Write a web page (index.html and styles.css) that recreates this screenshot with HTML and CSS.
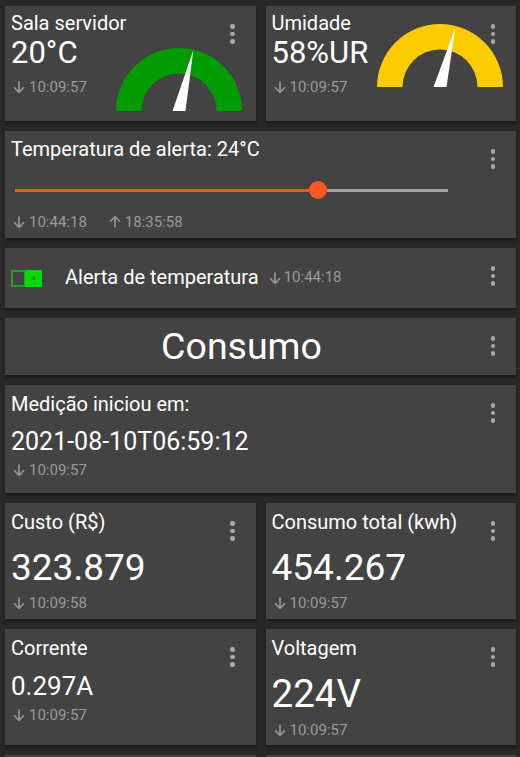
FILE: index.html
```html
<!DOCTYPE html>
<html lang="pt">
<head>
<meta charset="utf-8">
<title>Painel</title>
<link rel="stylesheet" href="styles.css">
</head>
<body>
<main class="board">

  <section class="tile tile-gauge gauge-low">
    <div class="info">
      <div class="title">Sala servidor</div>
      <div class="value value-gauge">20°C</div>
      <div class="stamp"><svg class="arrow" viewBox="0 0 12 12"><path d="M6 0.5V11.3M1 6.3L6 11.3L11 6.3"/></svg>10:09:57</div>
    </div>
    <svg class="gauge" viewBox="-63 -63 126 63">
      <path class="arc-green" d="M-63 0A63 63 0 0 1 63 0L37.5 0A37.5 37.5 0 0 0 -37.5 0Z"/>
      <polygon class="needle" points="-6.5,0 6.5,0 14.3,-60.7"/>
    </svg>
    <div class="menu"><span></span><span></span><span></span></div>
  </section>

  <section class="tile tile-gauge gauge-high">
    <div class="info">
      <div class="title">Umidade</div>
      <div class="value value-gauge">58%UR</div>
      <div class="stamp"><svg class="arrow" viewBox="0 0 12 12"><path d="M6 0.5V11.3M1 6.3L6 11.3L11 6.3"/></svg>10:09:57</div>
    </div>
    <svg class="gauge" viewBox="-63 -63 126 63">
      <path class="arc-yellow" d="M-63 0A63 63 0 0 1 63 0L37.5 0A37.5 37.5 0 0 0 -37.5 0Z"/>
      <polygon class="needle" points="-6.5,0 6.5,0 15.3,-59"/>
    </svg>
    <div class="menu"><span></span><span></span><span></span></div>
  </section>

  <section class="tile tile-slider wide">
    <div class="title">Temperatura de alerta: 24°C</div>
    <div class="slider">
      <div class="slider-fill" style="width:67.9%"></div>
      <div class="slider-thumb"></div>
      <div class="slider-rest"></div>
    </div>
    <div class="stamps">
      <div class="stamp"><svg class="arrow" viewBox="0 0 12 12"><path d="M6 0.5V11.3M1 6.3L6 11.3L11 6.3"/></svg>10:44:18</div>
      <div class="stamp"><svg class="arrow" viewBox="0 0 12 12"><path d="M6 11.5V0.7M1 5.7L6 0.7L11 5.7"/></svg>18:35:58</div>
    </div>
    <div class="menu"><span></span><span></span><span></span></div>
  </section>

  <section class="tile tile-switch wide">
    <svg class="switch" viewBox="0 0 31 17">
      <rect class="switch-off" x="1" y="1" width="13" height="15"/>
      <rect class="switch-on" x="14" y="0" width="17" height="17"/>
      <rect class="switch-dot" x="20.5" y="6.5" width="3.5" height="3.5"/>
    </svg>
    <div class="switch-label">
      <span class="title">Alerta de temperatura</span>
      <span class="stamp"><svg class="arrow" viewBox="0 0 12 12"><path d="M6 0.5V11.3M1 6.3L6 11.3L11 6.3"/></svg>10:44:18</span>
    </div>
    <div class="menu"><span></span><span></span><span></span></div>
  </section>

  <section class="tile tile-header wide">
    <div class="header-text">Consumo</div>
    <div class="menu"><span></span><span></span><span></span></div>
  </section>

  <section class="tile tile-text wide">
    <div class="title">Medição iniciou em:</div>
    <div class="value value-date">2021-08-10T06:59:12</div>
    <div class="stamp"><svg class="arrow" viewBox="0 0 12 12"><path d="M6 0.5V11.3M1 6.3L6 11.3L11 6.3"/></svg>10:09:57</div>
    <div class="menu"><span></span><span></span><span></span></div>
  </section>

  <section class="tile tile-value">
    <div class="title">Custo (R$)</div>
    <div class="value value-big">323.879</div>
    <div class="stamp"><svg class="arrow" viewBox="0 0 12 12"><path d="M6 0.5V11.3M1 6.3L6 11.3L11 6.3"/></svg>10:09:58</div>
    <div class="menu"><span></span><span></span><span></span></div>
  </section>

  <section class="tile tile-value">
    <div class="title">Consumo total (kwh)</div>
    <div class="value value-big">454.267</div>
    <div class="stamp"><svg class="arrow" viewBox="0 0 12 12"><path d="M6 0.5V11.3M1 6.3L6 11.3L11 6.3"/></svg>10:09:57</div>
    <div class="menu"><span></span><span></span><span></span></div>
  </section>

  <section class="tile tile-value">
    <div class="title">Corrente</div>
    <div class="value value-small">0.297A</div>
    <div class="stamp"><svg class="arrow" viewBox="0 0 12 12"><path d="M6 0.5V11.3M1 6.3L6 11.3L11 6.3"/></svg>10:09:57</div>
    <div class="menu"><span></span><span></span><span></span></div>
  </section>

  <section class="tile tile-value">
    <div class="title">Voltagem</div>
    <div class="value value-huge">224V</div>
    <div class="stamp"><svg class="arrow" viewBox="0 0 12 12"><path d="M6 0.5V11.3M1 6.3L6 11.3L11 6.3"/></svg>10:09:57</div>
    <div class="menu"><span></span><span></span><span></span></div>
  </section>

  <section class="tile tile-value"></section>
  <section class="tile tile-value"></section>

</main>
</body>
</html>
```

FILE: styles.css
```css
html, body {
  margin: 0;
  height: 100%;
  overflow: hidden;
  background: #282828;
}

body {
  font-family: Roboto, "Liberation Sans", sans-serif;
  color: #ffffff;
}

.board {
  display: grid;
  grid-template-columns: minmax(0, 1fr) minmax(0, 1fr);
  column-gap: 10px;
  row-gap: 10px;
  padding: 6px 4px 0 5px;
}

.tile {
  position: relative;
  box-sizing: border-box;
  min-width: 0;
  background: #434343;
  box-shadow: 0 2px 3px rgba(0, 0, 0, 0.45);
  padding: 7px 40px 0 6px;
  white-space: nowrap;
}

.wide {
  grid-column: 1 / -1;
}

.title {
  font-size: 20px;
  line-height: 24px;
  color: #ffffff;
}

.value {
  line-height: normal;
  color: #ffffff;
  margin-top: 12px;
}

.value-big { font-size: 37px; }
.value-huge { font-size: 38.5px; margin-top: 11px; }
.value-small { font-size: 26px; margin-top: 11px; }
.value-date { font-size: 25px; margin-top: 11px; }

.stamp {
  display: flex;
  align-items: center;
  gap: 4px;
  font-size: 15px;
  line-height: normal;
  color: #9a9a9a;
  margin-top: 4.5px;
}

.arrow {
  width: 12px;
  height: 12px;
  margin-left: 2px;
  flex: none;
}

.arrow path {
  fill: none;
  stroke: #9a9a9a;
  stroke-width: 1.6;
}

/* menu (three vertical dots) */
.menu {
  position: absolute;
  top: 18px;
  right: 21px;
  display: flex;
  flex-direction: column;
  gap: 3px;
}

.menu span {
  width: 4.5px;
  height: 4.5px;
  border-radius: 50%;
  background: #ababab;
}

/* gauge tiles */
.tile-gauge {
  height: 115px;
  display: flex;
  padding: 5px 13.5px 0 6px;
}

.tile-gauge .info {
  flex: 1;
  min-width: 0;
}

.value-gauge {
  font-size: 31px;
  margin-top: -1px;
}

.tile-gauge .stamp {
  margin-top: 6.5px;
}

.gauge {
  flex: none;
  width: 126px;
  height: 63px;
}

.gauge-low .gauge {
  align-self: flex-end;
  margin-bottom: 10.3px;
}

.gauge-high .gauge {
  align-self: flex-start;
  margin-top: 13px;
}

.arc-green { fill: #009c00; }
.arc-yellow { fill: #fecb00; }
.needle { fill: #ffffff; }

/* slider tile */
.tile-slider {
  height: 107px;
  padding-top: 6px;
}

.slider {
  display: flex;
  align-items: center;
  height: 18px;
  margin: 20.3px 28px 0 4px;
}

.slider-fill {
  height: 3px;
  background: #ff5722;
  flex: none;
}

.slider-thumb {
  width: 18px;
  height: 18px;
  border-radius: 50%;
  background: #ff5722;
  flex: none;
}

.slider-rest {
  flex: 1;
  height: 2.5px;
  background: #a3a3a3;
}

.stamps {
  display: flex;
  gap: 20px;
  margin-top: 14.2px;
}

.stamps .stamp {
  margin-top: 0;
}

/* switch tile */
.tile-switch {
  height: 60px;
  display: flex;
  align-items: center;
  padding: 0 40px 3px 6px;
}

.switch {
  width: 31px;
  height: 17px;
  flex: none;
  margin-top: 3px;
  margin-right: 23px;
}

.switch-off {
  fill: none;
  stroke: #2e9a2e;
  stroke-width: 2;
}

.switch-on { fill: #00dc00; }
.switch-dot { fill: #0b8f0b; }

.switch-label {
  display: flex;
  align-items: baseline;
  gap: 8px;
}

.switch-label .stamp {
  display: inline-flex;
  margin-top: 0;
  gap: 3px;
}

.switch-label .arrow {
  align-self: center;
  margin-top: 2px;
}

/* header tile */
.tile-header {
  height: 57px;
  display: flex;
  align-items: center;
  justify-content: center;
  padding: 0 38px 2px 0;
}

.header-text {
  font-size: 37.5px;
  line-height: normal;
}

/* text and value tiles */
.tile-text {
  height: 108px;
}

.tile-value {
  height: 116px;
}
```
